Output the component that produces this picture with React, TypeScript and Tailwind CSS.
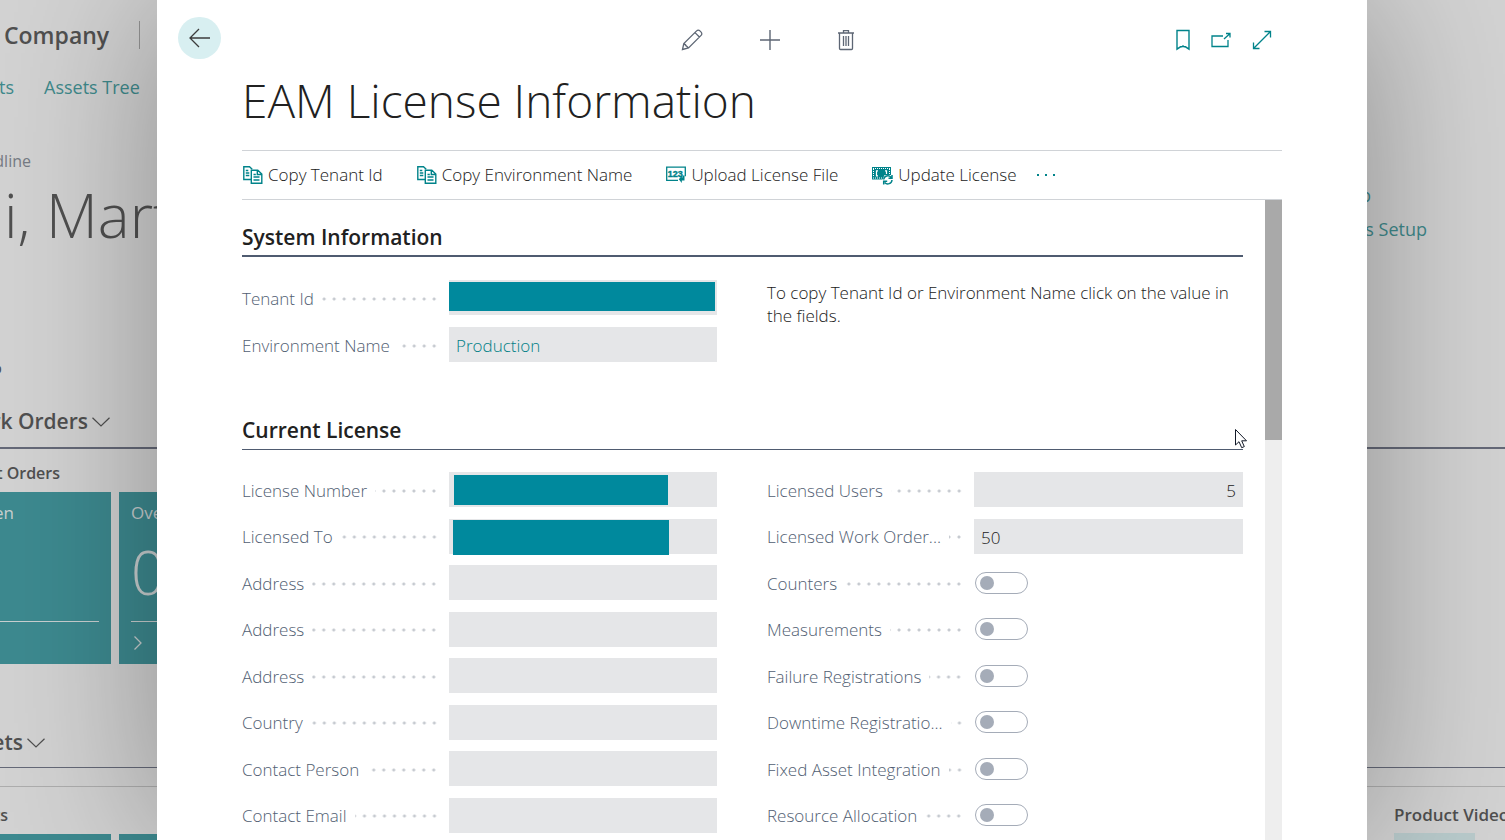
import React from "react";

type FieldProps = {
    id: string;
    label: string;
    value?: string;
    link?: boolean;
    alignRight?: boolean;
    mask?: string;
};

/* ── Icons ── */
const BackIcon = () => (
    <svg width="22" height="20" viewBox="0 0 22 20" fill="none" stroke="#3c3c3c" strokeWidth="1.3">
        <path d="M21 10H1.5M10 1L1 10l9 9" />
    </svg>
);

const PencilIcon = () => (
    <svg width="22" height="22" viewBox="0 0 22 22" fill="none" stroke="#5d6674" strokeWidth="1.3">
        <path d="M1.5 20.5l1.3-6L15.6 1.9a2.3 2.3 0 0 1 3.3 0l1.2 1.2a2.3 2.3 0 0 1 0 3.3L7.5 19zM14 3.6l4.4 4.4M2.8 14.5l4.7 4.5M3 14.7l1.5 1 .6 1.4 1.5.5" />
    </svg>
);

const PlusIcon = () => (
    <svg width="22" height="22" viewBox="0 0 22 22" fill="none" stroke="#5d6674" strokeWidth="1.4">
        <path d="M11 1v20M1 11h20" />
    </svg>
);

const TrashIcon = () => (
    <svg width="18" height="22" viewBox="0 0 18 22" fill="none" stroke="#5d6674" strokeWidth="1.3">
        <path d="M1 4h16M6.5 4V1.7h5V4M2.5 4v15.5a1 1 0 0 0 1 1h11a1 1 0 0 0 1-1V4M6.5 7v10M9 7v10M11.5 7v10" />
    </svg>
);

const BookmarkIcon = () => (
    <svg width="14" height="22" viewBox="0 0 14 22" fill="none" stroke="#00838a" strokeWidth="1.4">
        <path d="M1 1.5h12v18.7l-3.5-2.4H8L7 16.9l-1 .9H4.5L1 20.2z" />
    </svg>
);

const PopOutIcon = () => (
    <svg width="20" height="16" viewBox="0 0 20 16" fill="none" stroke="#00838a" strokeWidth="1.3">
        <path d="M12 4H1v10.5h16V8M13 7l5.500-5M15 1.5h4v4" />
    </svg>
);

const ExpandIcon = () => (
    <svg width="20" height="20" viewBox="0 0 20 20" fill="none" stroke="#00838a" strokeWidth="1.3">
        <path d="M1.5 18.5l17-17M12.5 1.5h6v6M1.5 12.5v6h6" />
    </svg>
);

const CopyIcon = () => (
    <svg width="20" height="18" viewBox="0 0 20 18" fill="none" stroke="#00838a" strokeWidth="1.4">
        <path d="M8 13.5H.8V.8h5.7l2.7 2.5M2.8 4.5h2.5M2.8 7h3.5M2.8 9.500h3.5" />
        <path d="M8.3 4.3h6.5l4 3.7v9.2H8.3zM14.3 4.5v4h4.3M10.5 8.5h2.3M10.5 11h6M10.5 14h6" />
    </svg>
);

const UploadIcon = () => (
    <svg width="20" height="18" viewBox="0 0 20 18">
        <path d="M12 14.4H.7V1.2h18.6v9" fill="none" stroke="#00838a" strokeWidth="1.3" />
        <text x="1.8" y="11.2" fontSize="9" fontWeight="700" fontFamily="Liberation Sans" fill="#00838a" stroke="#00838a" strokeWidth="0.4">123</text>
        <path d="M18.5 9.500v5h-2.700v2.500l-3-3.700 3-3.500v1.700h.7V9.500z" fill="#00838a" />
    </svg>
);

const UpdateIcon = () => (
    <svg width="21" height="19" viewBox="0 0 21 19">
        <path d="M0 1h19v8h-6.500l-2 4.500H0z" fill="#00838a" />
        <path d="M1 2.500h17M1 12h9" stroke="#fff" strokeWidth="1" strokeDasharray="1 1" />
        <path d="M6 4.800H4.500v5H6M13 4.800h1.500V8" fill="none" stroke="#fff" strokeWidth="1.2" />
        <path d="M1.500 3v8M17.500 3v5" stroke="#fff" strokeWidth="1" strokeDasharray="1 1" />
        <path d="M11.700 13.500a4.200 4.200 0 0 1 7.300-2.300M20 9v3.300h-3.500M20 14a4.200 4.200 0 0 1-7.300 2.500M11.700 18.500v-3.300h3.500" fill="none" stroke="#00838a" strokeWidth="1.5" />
    </svg>
);

const ChevronDown = () => (
    <svg width="18" height="10" viewBox="0 0 18 10" fill="none" stroke="#505050" strokeWidth="1.2">
        <path d="M.5.7L9 9l8.5-8.3" />
    </svg>
);

/* ── Fields ── */
function Caption({ id, label }: { id: string; label: string }) {
    return (
        <div className="flex w-[207px] shrink-0 items-center gap-2 pr-[10px] pt-[2px]">
            <label htmlFor={id} className="whitespace-nowrap leading-6 text-[#515e72]">{label}</label>
            <span className="h-[10px] flex-1 bg-[radial-gradient(circle,#c6cad0_1px,transparent_2px)] bg-[length:10px_10px] bg-right" />
        </div>
    );
}

function Field({ id, label, value = "", link, alignRight, mask }: FieldProps) {
    return (
        <div className="flex h-[35px]">
            <Caption id={id} label={label} />
            <div className="relative min-w-0 flex-1">
                <input
                    id={id}
                    readOnly
                    value={value}
                    className={`h-full w-full bg-[#e5e6e8] px-[7px] pt-[2px] outline-none ${link ? "text-[#007f86]" : "text-[#212121]"} ${alignRight ? "text-right" : ""}`}
                />
                {mask && <span className={`absolute bg-[#00899d] ${mask}`} />}
            </div>
        </div>
    );
}

function Toggle({ id, label }: { id: string; label: string }) {
    return (
        <div className="flex h-[35px] items-center">
            <Caption id={id} label={label} />
            <input
                id={id}
                type="checkbox"
                className="ml-px flex h-[22px] w-[53px] appearance-none items-center rounded-full border border-[#a5acb8] bg-white px-1 before:size-[14px] before:rounded-full before:bg-[#a5acb8] before:content-[''] checked:justify-end"
            />
        </div>
    );
}

const licenseFields: FieldProps[] = [
    { id: "license-number", label: "License Number", mask: "left-[5px] top-[3px] h-[30px] w-[214px]" },
    { id: "licensed-to", label: "Licensed To", mask: "left-1 top-px h-[35px] w-[216px]" },
    { id: "address-1", label: "Address" },
    { id: "address-2", label: "Address" },
    { id: "address-3", label: "Address" },
    { id: "country", label: "Country" },
    { id: "contact-person", label: "Contact Person" },
    { id: "contact-email", label: "Contact Email" },
];

const toggles = [
    { id: "counters", label: "Counters" },
    { id: "measurements", label: "Measurements" },
    { id: "failure", label: "Failure Registrations" },
    { id: "downtime", label: "Downtime Registratio..." },
    { id: "fixed-asset", label: "Fixed Asset Integration" },
    { id: "resource", label: "Resource Allocation" },
];

const actions = [
    { name: "Copy Tenant Id", Icon: CopyIcon },
    { name: "Copy Environment Name", Icon: CopyIcon },
    { name: "Upload License File", Icon: UploadIcon },
    { name: "Update License", Icon: UpdateIcon },
];

/* ── Dimmed role center behind the dialog ── */
function LeftBackdrop() {
    return (
        <aside className="min-w-0 overflow-hidden whitespace-nowrap text-[#505050]">
            <div className="flex h-[70px] items-center justify-between pl-1 pr-[17px]">
                <span className="text-[23px] font-semibold">Company</span>
                <span className="h-7 w-px bg-[#959595]" />
            </div>
            <nav className="flex h-[34px] items-center gap-[30px] text-lg text-[#3f8a8c]">
                <a href="#assets" className="flex w-[14px] justify-end">ts</a>
                <a href="#tree">Assets Tree</a>
            </nav>
            <div className="mt-[41px] flex h-8 w-[31px] items-center justify-end text-base text-[#767b84]">dline</div>
            <div className="flex h-20 items-center pb-1 pl-1 text-[60px] font-light">i, Mart</div>
            <div className="mt-[95px] flex h-8 w-[2px] items-center justify-end text-[17px]">o</div>
            <div className="mt-[11px] flex h-[54px] items-center gap-1 border-b-2 border-[#656978] pt-[2px]">
                <h3 className="flex w-[88px] justify-end text-[21px] font-semibold">rk Orders</h3>
                <ChevronDown />
            </div>
            <div className="flex h-[43px] w-[60px] items-center justify-end pt-1 text-base font-semibold">t Orders</div>
            <div className="flex h-[172px] gap-2 text-[#c9d0d1]">
                <div className="w-[111px] shrink-0 bg-[#3d8a90] pr-3">
                    <div className="flex h-[42px] w-[14px] items-center justify-end text-[17px]">en</div>
                    <div className="flex h-[87px] w-[2px] items-center justify-end pb-3 text-[60px] font-light">0</div>
                    <div className="border-t border-[#c9d0d1]" />
                </div>
                <div className="flex-1 bg-[#3d8a90] pl-3">
                    <div className="flex h-[42px] items-center text-[17px]">Ove</div>
                    <div className="flex h-[87px] items-center pb-3 text-[60px] font-light">0</div>
                    <div className="border-t border-[#c9d0d1] pl-[3px] pt-[14px]">
                        <svg width="8" height="14" viewBox="0 0 8 14" fill="none" stroke="#c9d0d1" strokeWidth="1.3">
                            <path d="M.5.5L7 7 .5 13.500" />
                        </svg>
                    </div>
                </div>
            </div>
            <div className="mt-[53px] flex h-[51px] items-center gap-1 border-b border-[#656978] pt-[2px]">
                <h3 className="flex w-[23px] justify-end text-[21px] font-semibold">ets</h3>
                <ChevronDown />
            </div>
            <div className="h-[19px] border-b border-[#aeaeae]" />
            <div className="flex h-[47px] w-2 items-center justify-end pt-2 text-base font-semibold">ts</div>
            <div className="flex h-10 gap-2">
                <div className="w-[111px] shrink-0 bg-[#3d8a90]" />
                <div className="flex-1 bg-[#3d8a90]" />
            </div>
        </aside>
    );
}

function RightBackdrop() {
    return (
        <aside className="min-w-0 overflow-hidden whitespace-nowrap text-[#505050]">
            <div className="flex h-[449px] flex-col border-b-2 border-[#656978] pt-[178px] text-lg text-[#3f8a8c]">
                <a href="#setup" className="flex h-[34px] w-1 items-center justify-end">p</a>
                <a href="#assets-setup" className="flex h-[34px] w-[60px] items-center justify-end">s Setup</a>
            </div>
            <div className="h-[319px] border-b border-[#656978]" />
            <div className="h-[19px] border-b border-[#aeaeae]" />
            <div className="flex h-[46px] items-center pl-[27px] pt-[10px] text-[17px] font-semibold">Product Video</div>
            <div className="ml-[27px] h-10 w-[81px] bg-[#b9cbcc]" />
        </aside>
    );
}

export default function App() {
    return (
        <div className="grid h-screen grid-cols-[157fr_1210fr_138fr] overflow-hidden bg-[#d3d3d3] font-['Open_Sans','Noto_Sans',sans-serif]">
            <LeftBackdrop />

            <main className="relative z-10 flex min-w-0 flex-col overflow-hidden bg-white px-[85px] text-[17px] font-[350] text-[#212121] shadow-[0_0_150px_rgba(0,0,0,0.34)]">
                {/* top icon bar */}
                <div className="grid h-[76px] shrink-0 grid-cols-[1fr_auto_1fr] items-center">
                    <button aria-label="Back" className="-ml-16 flex h-[42px] w-[43px] items-center justify-center rounded-full bg-[#d8eff1]"><BackIcon /></button>
                    <div className="flex items-center gap-14 pl-3 pt-1">
                        <button aria-label="Edit"><PencilIcon /></button>
                        <button aria-label="New"><PlusIcon /></button>
                        <button aria-label="Delete"><TrashIcon /></button>
                    </div>
                    <div className="flex items-center justify-end gap-[21px] pr-[10px] pt-1">
                        <button aria-label="Bookmark"><BookmarkIcon /></button>
                        <button aria-label="Open in new window"><PopOutIcon /></button>
                        <button aria-label="Expand"><ExpandIcon /></button>
                    </div>
                </div>

                <h1 className="flex h-[74px] shrink-0 items-start whitespace-nowrap text-[46px] font-light leading-[48px]">EAM License Information</h1>

                {/* actions */}
                <div className="flex h-[50px] shrink-0 items-center gap-[34px] border-y border-[#d0d3d7] pl-px">
                    {actions.map(({ name, Icon }) => (
                        <button key={name} className="flex items-center gap-[5px] whitespace-nowrap">
                            <Icon />
                            {name}
                        </button>
                    ))}
                    <button aria-label="More options" className="-ml-[14px] flex gap-[6px]">
                        <span className="size-[2px] bg-[#00838a]" />
                        <span className="size-[2px] bg-[#00838a]" />
                        <span className="size-[2px] bg-[#00838a]" />
                    </button>
                </div>

                <div className="flex min-h-0 flex-1 justify-between">
                    <div className="mr-[22px] min-w-0 flex-1">
                        <h2 className="flex h-[57px] items-center border-b-2 border-[#4f5b70] pt-5 text-[21px] font-semibold">System Information</h2>
                        <div className="grid grid-cols-[475fr_476fr] gap-x-[50px] pt-[23px]">
                            <div className="flex flex-col gap-3">
                                <Field id="tenant-id" label="Tenant Id" mask="left-0 top-[2px] right-[2px] h-[29px]" />
                                <Field id="environment" label="Environment Name" value="Production" link />
                            </div>
                            <p className="pt-px leading-[23px]">
                                To copy Tenant Id or Environment Name click on the value in the fields.
                            </p>
                        </div>

                        <div className="relative mt-[38px]">
                            <h2 className="flex h-[50px] items-center border-b border-[#4f5b70] pt-3 text-[21px] font-semibold">Current License</h2>
                            <svg className="absolute right-[-5px] top-[28px]" width="14" height="21" viewBox="0 0 14 21" fill="#fff" stroke="#111827" strokeWidth="1">
                                <path d="M1.500 1.500v15.500l3.500-3.300 2.700 6 2.600-1.100-2.600-5.800h4.800z" />
                            </svg>
                        </div>
                        <div className="mt-[22px] grid h-[372px] grid-flow-col grid-cols-[475fr_476fr] grid-rows-8 gap-x-[50px]">
                            {licenseFields.map((field) => <Field key={field.id} {...field} />)}
                            <Field id="licensed-users" label="Licensed Users" value="5" alignRight />
                            <Field id="licensed-work-orders" label="Licensed Work Order..." value="50" />
                            {toggles.map((toggle) => <Toggle key={toggle.id} {...toggle} />)}
                        </div>
                    </div>
                    <div className="w-[17px] bg-[#eee]">
                        <div className="h-[240px] bg-[#a9a9a9]" />
                    </div>
                </div>
            </main>

            <RightBackdrop />
        </div>
    );
}
